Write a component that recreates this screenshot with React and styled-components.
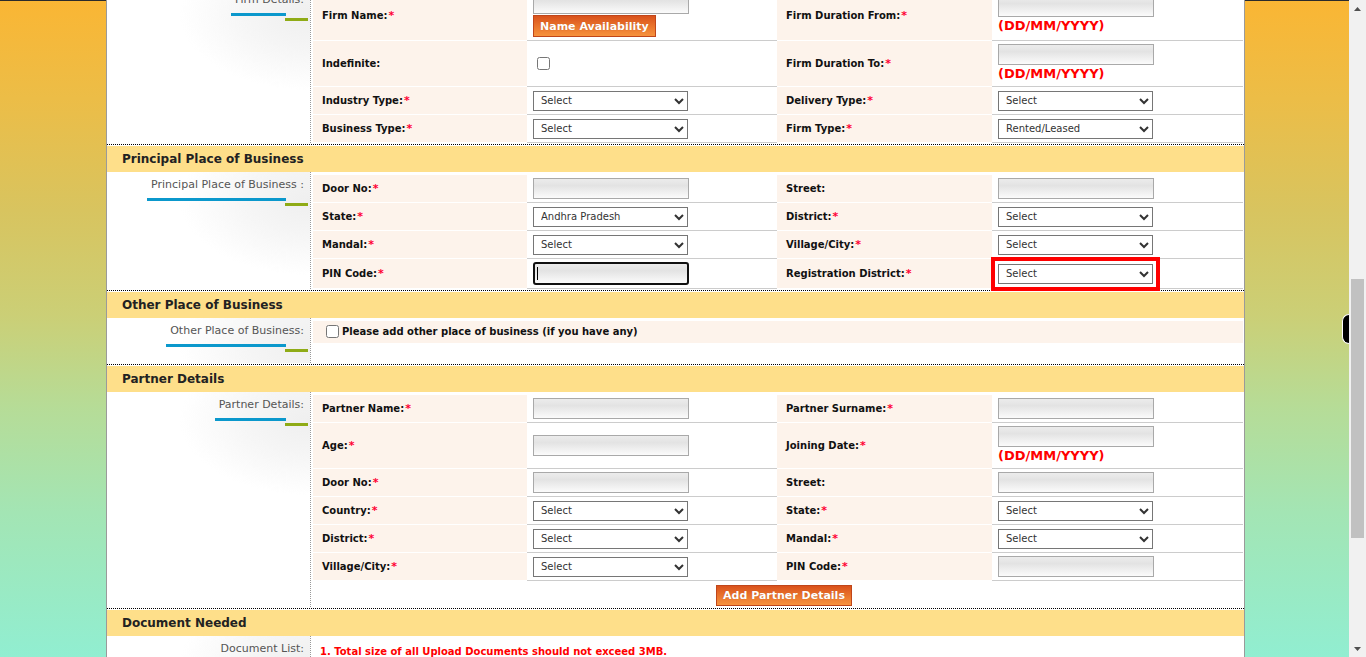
import React from 'react';
import styled, { createGlobalStyle } from 'styled-components';

const GlobalStyle = createGlobalStyle`
  html, body { margin: 0; padding: 0; height: 100%; overflow: hidden; }
  body { font-family: "DejaVu Sans", Verdana, sans-serif; }
  #root { height: 100%; }
  * { box-sizing: border-box; }
`;

const Screen = styled.div`
  display: flex;
  height: 100vh;
  overflow: hidden;
`;

const Viewport = styled.div`
  flex: 1;
  min-width: 0;
  overflow: hidden;
  padding-left: 2px;
  background:
    linear-gradient(#2b2b2b, #2b2b2b) top left / 100% 1px no-repeat,
    linear-gradient(180deg, #fab634 0%, #ecbd47 15%, #d8c45f 32%, #cbcf76 48%, #b6dc97 62%, #a3e5b4 78%, #91eed1 100%);
`;

const Container = styled.div`
  width: 1139px;
  margin: -13px auto 0;
  background: #fff;
  border-left: 1px solid #9a9a9a;
  border-right: 1px solid #9a9a9a;
`;

const SectionHeader = styled.div`
  margin-top: 1px;
  height: 26px;
  line-height: 26px;
  padding-left: 15px;
  background: #fedf8a;
  color: #222;
  font-size: 12px;
  font-weight: bold;
`;

const SectionBody = styled.div`
  display: grid;
  grid-template-columns: 204px 1fr;
  border-bottom: 1px dotted #000;
  padding-bottom: 1px;
`;

const SideCell = styled.div`
  display: flex;
  justify-content: flex-end;
  align-items: flex-start;
  border-right: 1px dotted #999;
  padding: 6px 6px 11px 0;
  background:
    radial-gradient(ellipse 130px 75px at 100% 28px, #efefef 0%, #f5f5f5 45%, rgba(255,255,255,0) 100%),
    #fff;
`;

const SideLabel = styled.div`
  display: flex;
  flex-direction: column;
  align-items: stretch;
  font-size: 11px;
  line-height: 13px;
  color: #555;
  white-space: nowrap;
`;

const Underline = styled.div`
  display: flex;
  align-items: flex-start;
  height: 8px;
  margin: 7px -4px 0 -4px;
`;

const BlueBar = styled.span`
  flex: 1;
  height: 3px;
  background: #0b98cc;
`;

const GreenBar = styled.span`
  width: 23px;
  height: 3px;
  margin-top: 5px;
  margin-left: -1px;
  background: #8fab16;
`;

const Content = styled.div`
  padding: 3px 1px 0 2px;
`;

const FormGrid = styled.div`
  display: grid;
  grid-template-columns: 214px 250px 215px 251px;
`;

const LabelCell = styled.div`
  display: flex;
  align-items: center;
  min-height: 28px;
  padding: 0 9px;
  background: #fdf3eb;
  border-bottom: 1px solid #fff;
  font-size: 10px;
  font-weight: bold;
  color: #111;
`;

const Req = styled.span`
  color: #ff0033;
  font-size: 11px;
  margin-left: 1px;
`;

const FieldCell = styled.div`
  display: flex;
  flex-direction: column;
  justify-content: center;
  align-items: flex-start;
  min-height: 28px;
  padding: 3px 6px;
  border-bottom: 1px solid #ccc;
`;

const TextInput = styled.input`
  display: block;
  width: 156px;
  height: ${p => (p.$focused ? '23px' : '21px')};
  margin: 0;
  padding: 0 3px;
  border: ${p => (p.$focused ? '2px solid #111' : '1px solid #a9a9a9')};
  border-radius: ${p => (p.$focused ? '3px' : '0')};
  outline: none;
  font-family: "DejaVu Sans", Verdana, sans-serif;
  font-size: 10px;
  background: ${p =>
    p.$focused
      ? 'linear-gradient(#000, #000) 2px 3px / 1px 13px no-repeat, linear-gradient(180deg, #ececec 0%, #e3e3e3 35%, #fbfbfb 100%)'
      : 'linear-gradient(180deg, #ececec 0%, #e3e3e3 35%, #fbfbfb 100%)'};
`;

const Select = styled.select`
  display: block;
  width: 155px;
  height: 20px;
  margin: 0;
  padding: 0 0 0 3px;
  border: 1px solid #767676;
  border-radius: 0;
  background: #fff;
  color: #333;
  font-family: "DejaVu Sans", Verdana, sans-serif;
  font-size: 10px;
  outline: ${p => (p.$highlight ? '4px solid #ff0000' : 'none')};
  outline-offset: 3px;
`;

const Checkbox = styled.input.attrs({ type: 'checkbox' })`
  width: 13px;
  height: 13px;
  margin: 3px 3px 3px 4px;
`;

const OrangeButton = styled.button`
  height: ${p => (p.$small ? '22px' : '21px')};
  margin: ${p => (p.$small ? '1px 0 0' : '0')};
  padding: 0 6px;
  border: 1px solid #c0461a;
  background: linear-gradient(180deg, #d9521c 0%, #e8702a 45%, #f6923d 100%);
  color: #fff;
  font-family: "DejaVu Sans", Verdana, sans-serif;
  font-size: 11px;
  font-weight: bold;
  text-shadow: 0 0 1px rgba(120, 40, 0, 0.4);
  cursor: pointer;
`;

const Hint = styled.div`
  color: #f00;
  font-size: 13px;
  font-weight: bold;
  line-height: 18px;
  white-space: nowrap;
`;

const OptionRow = styled.div`
  display: flex;
  align-items: center;
  min-height: 22px;
  padding: 1px 9px 2px;
  background: #fdf3eb;
  font-size: 10px;
  font-weight: bold;
  color: #111;
`;

const ButtonRow = styled.div`
  grid-column: 1 / -1;
  display: flex;
  justify-content: center;
  padding: 4px 0 1px 12px;
`;

const DocNote = styled.div`
  padding: 6px 7px;
  color: #f00;
  font-size: 10px;
  font-weight: bold;
  line-height: 13px;
`;

const ScrollBar = styled.div`
  width: 17px;
  flex: none;
  display: flex;
  flex-direction: column;
  background: #f1f1f1;
`;

const ScrollArrow = styled.div`
  height: 17px;
  flex: none;
  display: flex;
  align-items: center;
  justify-content: center;
`;

const ScrollTrack = styled.div`
  flex: 1;
  padding: 0 2px;
`;

const ScrollThumb = styled.div`
  margin-top: 262px;
  height: 259px;
  background: #c1c1c1;
`;

const SideTab = styled.div`
  position: fixed;
  top: 314px;
  right: 17px;
  width: 7px;
  height: 30px;
  background: #000;
  border: 1px solid #fff;
  border-right: none;
  border-radius: 7px 0 0 7px;
`;

const Side = ({ text, bars = true }) => (
  <SideCell>
    <SideLabel>
      <span>{text}</span>
      {bars && (
        <Underline>
          <BlueBar />
          <GreenBar />
        </Underline>
      )}
    </SideLabel>
  </SideCell>
);

const Label = ({ text, req }) => (
  <LabelCell>
    {text}
    {req && <Req>*</Req>}
  </LabelCell>
);

const Field = ({ f }) => {
  switch (f.kind) {
    case 'input':
      return (
        <FieldCell>
          <TextInput type="text" $focused={f.focused} readOnly />
        </FieldCell>
      );
    case 'inputButton':
      return (
        <FieldCell>
          <TextInput type="text" readOnly />
          <OrangeButton $small>Name Availability</OrangeButton>
        </FieldCell>
      );
    case 'date':
      return (
        <FieldCell>
          <TextInput type="text" readOnly />
          <Hint>(DD/MM/YYYY)</Hint>
        </FieldCell>
      );
    case 'check':
      return (
        <FieldCell>
          <Checkbox readOnly />
        </FieldCell>
      );
    case 'select':
    default:
      return (
        <FieldCell>
          <Select $highlight={f.highlight} defaultValue={f.value || 'Select'}>
            <option>{f.value || 'Select'}</option>
          </Select>
        </FieldCell>
      );
  }
};

const Rows = ({ rows }) =>
  rows.map((r, i) => (
    <React.Fragment key={i}>
      <Label text={r[0]} req={r[1]} />
      <Field f={r[2]} />
      <Label text={r[3]} req={r[4]} />
      <Field f={r[5]} />
    </React.Fragment>
  ));

const firmRows = [
  ['Firm Name:', true, { kind: 'inputButton' }, 'Firm Duration From:', true, { kind: 'date' }],
  ['Indefinite:', false, { kind: 'check' }, 'Firm Duration To:', true, { kind: 'date' }],
  ['Industry Type:', true, { kind: 'select' }, 'Delivery Type:', true, { kind: 'select' }],
  ['Business Type:', true, { kind: 'select' }, 'Firm Type:', true, { kind: 'select', value: 'Rented/Leased' }],
];

const principalRows = [
  ['Door No:', true, { kind: 'input' }, 'Street:', false, { kind: 'input' }],
  ['State:', true, { kind: 'select', value: 'Andhra Pradesh' }, 'District:', true, { kind: 'select' }],
  ['Mandal:', true, { kind: 'select' }, 'Village/City:', true, { kind: 'select' }],
  ['PIN Code:', true, { kind: 'input', focused: true }, 'Registration District:', true, { kind: 'select', highlight: true }],
];

const partnerRows = [
  ['Partner Name:', true, { kind: 'input' }, 'Partner Surname:', true, { kind: 'input' }],
  ['Age:', true, { kind: 'input' }, 'Joining Date:', true, { kind: 'date' }],
  ['Door No:', true, { kind: 'input' }, 'Street:', false, { kind: 'input' }],
  ['Country:', true, { kind: 'select' }, 'State:', true, { kind: 'select' }],
  ['District:', true, { kind: 'select' }, 'Mandal:', true, { kind: 'select' }],
  ['Village/City:', true, { kind: 'select' }, 'PIN Code:', true, { kind: 'input' }],
];

const Arrow = ({ up }) => (
  <svg width="7" height="4" viewBox="0 0 7 4">
    <path d={up ? 'M0 4 L3.5 0 L7 4 Z' : 'M0 0 L3.5 4 L7 0 Z'} fill="#505050" />
  </svg>
);

export default function App() {
  return (
    <>
      <GlobalStyle />
      <Screen>
        <Viewport>
          <Container>
            <SectionBody>
              <Side text="Firm Details:" />
              <Content>
                <FormGrid>
                  <Rows rows={firmRows} />
                </FormGrid>
              </Content>
            </SectionBody>

            <SectionHeader>Principal Place of Business</SectionHeader>
            <SectionBody>
              <Side text="Principal Place of Business :" />
              <Content>
                <FormGrid>
                  <Rows rows={principalRows} />
                </FormGrid>
              </Content>
            </SectionBody>

            <SectionHeader>Other Place of Business</SectionHeader>
            <SectionBody>
              <Side text="Other Place of Business:" />
              <Content>
                <OptionRow>
                  <Checkbox readOnly />
                  Please add other place of business (if you have any)
                </OptionRow>
              </Content>
            </SectionBody>

            <SectionHeader>Partner Details</SectionHeader>
            <SectionBody>
              <Side text="Partner Details:" />
              <Content>
                <FormGrid>
                  <Rows rows={partnerRows} />
                  <ButtonRow>
                    <OrangeButton>Add Partner Details</OrangeButton>
                  </ButtonRow>
                </FormGrid>
              </Content>
            </SectionBody>

            <SectionHeader>Document Needed</SectionHeader>
            <SectionBody>
              <Side text="Document List:" />
              <Content>
                <DocNote>1. Total size of all Upload Documents should not exceed 3MB.</DocNote>
              </Content>
            </SectionBody>
          </Container>
        </Viewport>
        <ScrollBar>
          <ScrollArrow>
            <Arrow up />
          </ScrollArrow>
          <ScrollTrack>
            <ScrollThumb />
          </ScrollTrack>
          <ScrollArrow>
            <Arrow />
          </ScrollArrow>
        </ScrollBar>
      </Screen>
      <SideTab />
    </>
  );
}
